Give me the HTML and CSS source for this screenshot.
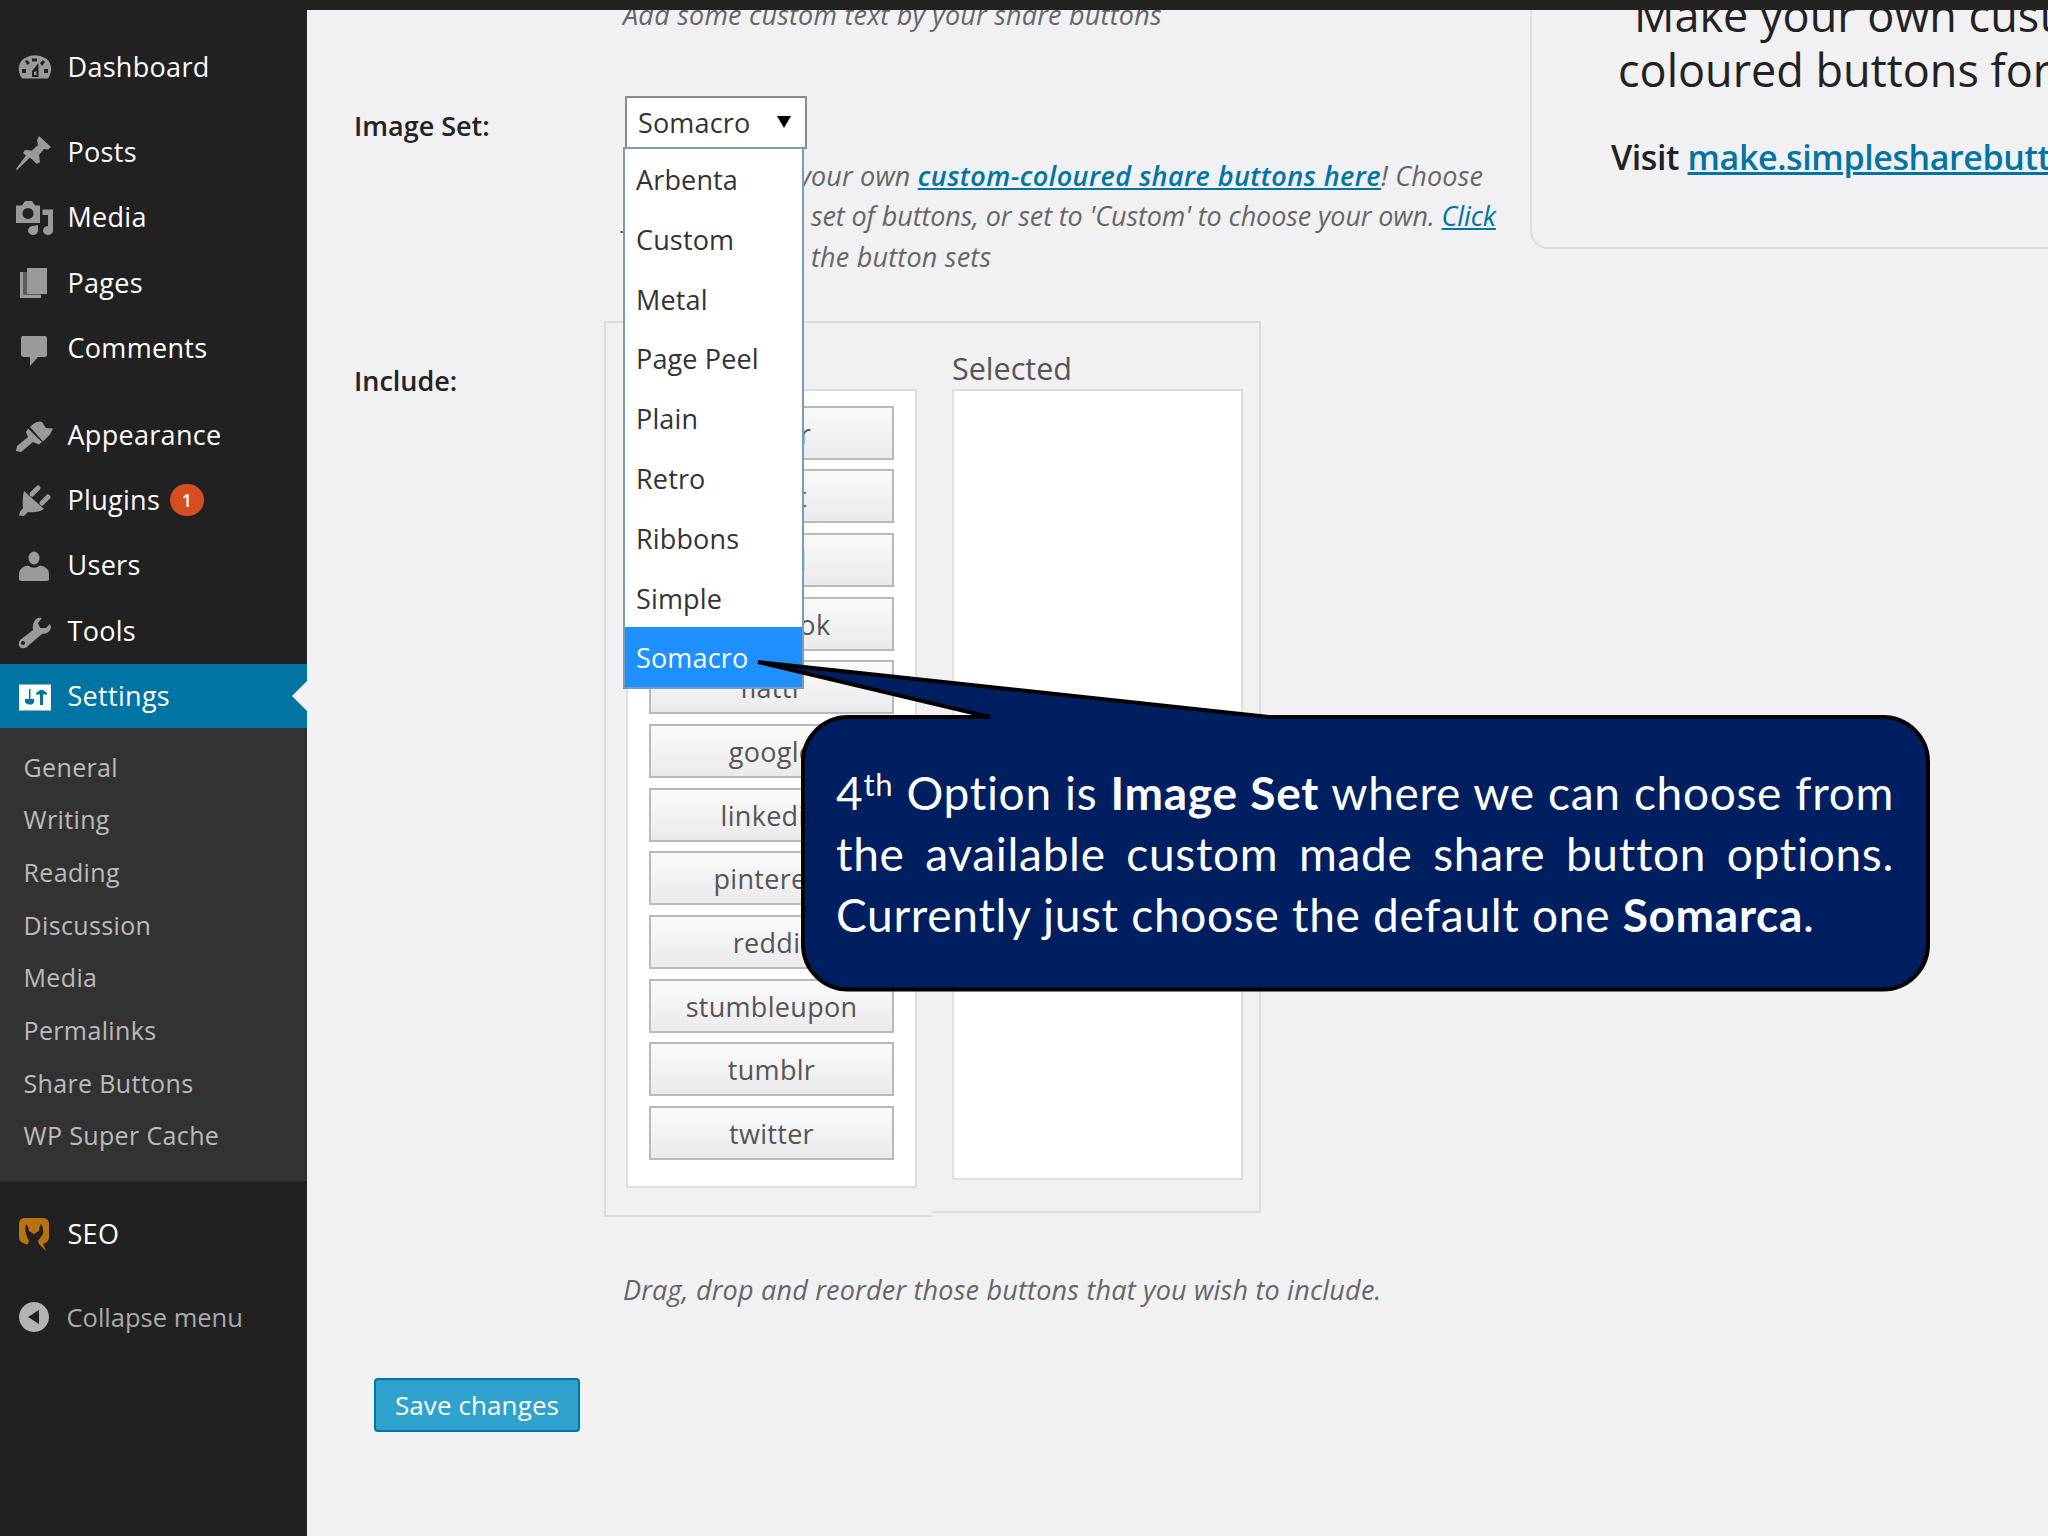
FILE: index.html
```html
<!DOCTYPE html>
<html lang="en">
  <head>
    <title>Share Buttons Settings</title>
    <meta charset="UTF-8" />
    <link rel="stylesheet" href="styles.css">
  </head>

  <body>
    <div class="topbar"></div>

    <div class="page">
      <nav class="sidebar">
        <ul class="menu">
          <li class="dashboard">
            <svg class="icon" viewBox="0 0 44 44"><path fill-rule="evenodd" d="M10 33.500C5 26 6 18 12 13.500Q23 7 34 13.500C40 18 41 26 36 33.500ZM20 13.500v3h5v-3ZM13 16l2 4 3-2-3-3ZM31 15l-3 3 2 3 3-4ZM10 24v4h4v-4ZM32 24v4h4v-4ZM26.500 18L20 26v6h6.500ZM24.500 26v4H22v-3Z"/></svg>
            <span>Dashboard</span>
          </li>
          <li class="posts">
            <svg class="icon" viewBox="0 0 44 44"><path d="M27 6L39 17l-3 2.500-4-.5-5 6 1 7-3 2-7-6.500L5 40l-1-1L14 25.500 11 23l2-3 7 .5 6-5.500-1-5Z"/></svg>
            <span>Posts</span>
          </li>
          <li class="media">
            <svg class="icon" viewBox="0 0 44 44"><path fill-rule="evenodd" d="M4 10.500h6L13 6h7l3 4.500h5V28H4ZM16 13a5.500 5.500 0 1 0 .01 0ZM30.500 14.500H41V36a5 4.500 0 1 1-5-5V20h-5.500ZM26 30v6a5 4.500 0 1 1-5-5Z"/></svg>
            <span>Media</span>
          </li>
          <li class="pages">
            <svg class="icon" viewBox="0 0 44 44"><path d="M15 7H35V33H15ZM8 11h3.500V34H29v3H8Z"/><path class="shade" d="M11.500 11H15V33H29V34H11.500Z"/></svg>
            <span>Pages</span>
          </li>
          <li class="comments">
            <svg class="icon" viewBox="0 0 44 44"><path d="M10 10H33q2 0 2 2V29q0 2-2 2H26L18 40V31H12q-3 0-3-3V12Z"/></svg>
            <span>Comments</span>
          </li>
          <li class="appearance">
            <svg class="icon" viewBox="0 0 44 44"><path d="M20 12q5-5 10-3l4 6 7 .500-3 6-7 7L18 14ZM16 15.500L30 29l-3 2.500-6-2.500L9 39l-5-1 1-5L16 24l-2-5Z"/></svg>
            <span>Appearance</span>
          </li>
          <li class="plugins">
            <svg class="icon" viewBox="0 0 44 44"><path d="M12 13L32 31q-6 4-16 3l-4 4-5-.500 1-4 3-3Q10 20 12 13Z"/><path class="prong" d="M20 16L26 10M30 25L36 19"/></svg>
            <span>Plugins</span>
            <span class="badge">1</span>
          </li>
          <li class="users">
            <svg class="icon" viewBox="0 0 44 44"><ellipse cx="22" cy="15" rx="5.500" ry="6.500"/><path d="M7 37V31q0-7 9-8.500Q22 27 28 22.500 37 24 37 31v6q-1 1-3 1H10q-2 0-3-1Z"/></svg>
            <span>Users</span>
          </li>
          <li class="tools">
            <svg class="icon" viewBox="0 0 44 44"><path fill-rule="evenodd" d="M30 9l-4 5 2 5 6 0 4-4 1 3q-1 7-9 7L17 36q-3 4-8 3-4-3-1-8L21 21q-1-7 3-11 3-2 6-1ZM11 32a2 2 0 1 0 .01 0Z"/></svg>
            <span>Tools</span>
          </li>
          <li class="settings current">
            <svg class="icon" viewBox="0 0 44 44"><path fill-rule="evenodd" d="M7 10.500H39v26H7ZM17 15v10h-4v3.500l3 2h4l2-2V25h-3.500V15ZM28 31V20.500h-4V19l4-3h3l4 3v1.500h-4V31Z"/></svg>
            <span>Settings</span>
          </li>
        </ul>
        <ul class="submenu">
          <li>General</li>
          <li>Writing</li>
          <li>Reading</li>
          <li>Discussion</li>
          <li>Media</li>
          <li>Permalinks</li>
          <li>Share Buttons</li>
          <li>WP Super Cache</li>
        </ul>
        <ul class="menu menu-bottom">
          <li class="seo">
            <svg class="icon" viewBox="0 0 44 44"><path d="M12 6H32q5 1 5 6V26q-1 5-6 6l3 7-9-9-5 1-3 2Q7 31 7 26V12q0-5 5-6Z"/><path class="cut" d="M14 12q3 3 3 7l5 3 5-3q0-4 2-7 3 5 2 10l-5 7 1 4H15q3-3 1-6-4-8-2-15Z"/></svg>
            <span>SEO</span>
          </li>
          <li class="collapse">
            <svg class="icon" viewBox="0 0 44 44"><path fill-rule="evenodd" d="M22 7a15 15 0 1 0 .01 0ZM27 15V29L16 22Z"/></svg>
            <span>Collapse menu</span>
          </li>
        </ul>
      </nav>

      <main class="content">
        <p class="hint hint-text">Add some custom text by your share buttons</p>

        <div class="row row-set">
          <div class="label">Image Set:</div>
          <div class="field">
            <div class="select">
              <span>Somacro</span>
              <svg class="arrow" viewBox="0 0 14 12"><path d="M0 0H14L7 12Z"/></svg>
              <ul class="options">
                <li>Arbenta</li>
                <li>Custom</li>
                <li>Metal</li>
                <li>Page Peel</li>
                <li>Plain</li>
                <li>Retro</li>
                <li>Ribbons</li>
                <li>Simple</li>
                <li class="active">Somacro</li>
              </ul>
            </div>
            <p class="hint hint-set">
              <span class="line l1"><span class="lead lead-right">Simply make y</span>our own <a class="strong">custom-coloured share buttons here</a>! Choose</span>
              <span class="line l2"><span class="lead">your favourite</span>set of buttons, or set to 'Custom' to choose your own. <a>Click</a></span>
              <span class="line l3"><span class="lead">here to preview</span>the button sets</span>
            </p>
          </div>
        </div>

        <div class="row row-include">
          <div class="label">Include:</div>
          <div class="sorter">
            <div class="column available">
              <h3>Available</h3>
              <ul class="list">
                <li>buffer</li>
                <li>diggit</li>
                <li>email</li>
                <li>facebook</li>
                <li>flattr</li>
                <li>google</li>
                <li>linkedin</li>
                <li>pinterest</li>
                <li>reddit</li>
                <li>stumbleupon</li>
                <li>tumblr</li>
                <li>twitter</li>
              </ul>
            </div>
            <div class="column selected">
              <h3>Selected</h3>
              <ul class="list"></ul>
            </div>
          </div>
        </div>

        <p class="hint hint-drag">Drag, drop and reorder those buttons that you wish to include.</p>

        <button class="save">Save changes</button>
      </main>

      <aside class="promo">
        <h2><span class="promo-first">Make your own custom-</span><span class="promo-second">coloured buttons for free</span></h2>
        <p>Visit <a>make.simplesharebuttons.com</a></p>
      </aside>
    </div>

    <div class="callout">
      <svg class="bubble" viewBox="0 0 1182 340"><path d="M8 5L519 60H1133A45 45 0 0 1 1178 105V287.500A45 45 0 0 1 1133 332.500H98A45 45 0 0 1 53 287.500V105A45 45 0 0 1 98 60H240Z"/></svg>
      <div class="callout-text">
        <div class="c1">4<sup>th</sup> Option is <b>Image Set</b> where we can choose from</div>
        <div class="c2">the available custom made share button options.</div>
        <div class="c3">Currently just choose the default one <b>Somarca</b>.</div>
      </div>
    </div>
  </body>
</html>
```

FILE: styles.css
```css
* {
  box-sizing: border-box;
}
body {
  margin: 0;
  width: 2048px;
  height: 1536px;
  overflow: hidden;
  position: relative;
  background: #f1f0f2;
  color: #222;
  font-family: "Open Sans", sans-serif;
  font-size: 27px;
}
ul, p, h2, h3 {
  margin: 0;
  padding: 0;
  list-style: none;
  font-weight: 400;
}
a {
  color: #0074a2;
  text-decoration: underline;
}

.topbar {
  height: 10px;
  background: #222221;
}
.page {
  display: flex;
  height: 1526px;
  overflow: hidden;
}

/* sidebar */
.sidebar {
  width: 307px;
  flex: none;
  background: #222122;
  padding-top: 24px;
}
.menu li {
  height: 65.4px;
  display: flex;
  align-items: center;
  padding-left: 11.500px;
  color: #fff;
  letter-spacing: 0.3px;
  white-space: nowrap;
}
.menu span {
  line-height: 36px;
}
.menu .posts {
  margin-top: 20px;
}
.menu .appearance {
  margin-top: 21px;
}
.menu .current {
  height: 64px;
  background: #0074a2;
  position: relative;
}
.current::after {
  content: "";
  position: absolute;
  right: 0;
  top: 17px;
  border: 15px solid transparent;
  border-left: 0;
  border-right-color: #f1f0f2;
}
.icon {
  width: 44px;
  height: 44px;
  margin-right: 12px;
  flex: none;
  fill: #9b999b;
}
.current .icon {
  fill: #fff;
}
.prong {
  stroke: #9b999b;
  stroke-width: 5;
  stroke-linecap: round;
}
.shade {
  fill: #5c5a5c;
}
.menu .badge {
  width: 34px;
  height: 32px;
  line-height: 32px;
  margin-left: 10px;
  border-radius: 16px;
  background: #d54e21;
  font-size: 18px;
  font-weight: 600;
  text-align: center;
}
.submenu {
  height: 453px;
  padding: 13px 0 0 23.500px;
  background: #333233;
  color: #bbb;
  font-size: 25px;
  letter-spacing: 0.36px;
}
.submenu li {
  height: 52.700px;
  line-height: 52.700px;
}
.menu-bottom {
  padding-top: 20.500px;
}
.seo .icon {
  fill: #b8730f;
}
.seo .cut {
  fill: #222122;
}
.menu .collapse {
  margin-top: 18px;
  color: #aaa;
  font-size: 25.500px;
  letter-spacing: 0;
}
.collapse .icon {
  fill: #b4b2b4;
  margin-right: 11px;
}

/* form */
.content {
  width: 1223px;
  flex: none;
  padding-left: 47px;
}
.hint {
  font-size: 27px;
  font-style: italic;
  letter-spacing: 0.2px;
  line-height: 40.500px;
  color: #666;
  white-space: nowrap;
}
.hint-text {
  margin: -15.500px 0 0 269px;
}
.row {
  display: flex;
}
.label {
  width: 271px;
  flex: none;
  font-weight: 600;
  line-height: 36px;
}
.row-set {
  margin-top: 61px;
}
.row-set .label {
  padding-top: 12px;
}
.select {
  width: 182px;
  height: 53px;
  position: relative;
  display: flex;
  align-items: center;
  justify-content: space-between;
  padding: 0 14px 1px 11px;
  border: 2px solid #8b898c;
  background: #fff;
  color: #333;
  letter-spacing: 0.15px;
}
.arrow {
  width: 14px;
  height: 12px;
}
.options {
  position: absolute;
  z-index: 1;
  left: -4px;
  top: 49px;
  width: 181px;
  border: 2px solid #7a9cb6;
  background: #fff;
}
.options li {
  height: 59.800px;
  line-height: 61px;
  padding-left: 11px;
}
.options .active {
  background: #1e90ff;
  color: #fff;
}
.hint-set {
  margin: 6.500px 0 0 -2px;
}
.line {
  display: block;
}
.lead {
  display: inline-block;
  width: 188px;
}
.lead-right {
  text-align: right;
}
.l1 {
  letter-spacing: 0.15px;
}
.l2 {
  letter-spacing: -0.12px;
}
.l3 .lead {
  letter-spacing: -0.2px;
}
.strong {
  font-weight: 600;
  letter-spacing: 0.45px;
}
.row-include {
  margin-top: 43.500px;
}
.row-include .label {
  width: 250px;
  padding-top: 42px;
}
.sorter {
  display: flex;
  align-items: flex-start;
}
.column {
  border: 2px solid #dddcdf;
  padding-top: 24px;
}
.column h3 {
  font-size: 30.500px;
  line-height: 42px;
  color: #555;
}
.available {
  width: 328px;
  height: 896px;
  border-right: 0;
  padding-left: 20px;
}
.selected {
  width: 329px;
  height: 892px;
  border-left: 0;
  padding-left: 20px;
}
.list {
  width: 291px;
  height: 799px;
  border: 2px solid #dfdee0;
  background: #fff;
}
.available .list {
  display: flex;
  flex-direction: column;
  gap: 9.700px;
  padding: 15px 0 0 21px;
}
.selected .list {
  height: 791px;
}
.list li {
  width: 245px;
  height: 54px;
  line-height: 52px;
  border: 2px solid #b9b8bb;
  background: linear-gradient(#fafafb, #ebeaec);
  color: #555;
  letter-spacing: 0.3px;
  text-align: center;
}
.hint-drag {
  margin: 53px 0 0 269px;
}
.save {
  display: block;
  width: 206px;
  height: 54px;
  margin: 67.500px 0 0 20px;
  padding: 0;
  border: 2px solid #0074a2;
  border-radius: 4px;
  background: #2ea2cc;
  color: #fff;
  font: 26px "Open Sans", sans-serif;
  letter-spacing: 0.1px;
}

/* right hand box */
.promo {
  width: 900px;
  height: 239px;
  flex: none;
  border: 2px solid #e0dfe2;
  border-top: 0;
  border-radius: 0 0 0 18px;
  white-space: nowrap;
}
.promo h2 {
  font-size: 45px;
  line-height: 55px;
  margin-top: -23px;
}
.promo h2 span {
  display: block;
}
.promo-first {
  padding-left: 102px;
}
.promo-second {
  padding-left: 86px;
}
.promo p {
  margin-top: 30px;
  padding-left: 79px;
  font-size: 34px;
  font-weight: 600;
  letter-spacing: -0.4px;
  line-height: 60px;
}

/* callout over the form */
.callout {
  position: absolute;
  z-index: 2;
  left: 750px;
  top: 657px;
  width: 1182px;
  height: 340px;
}
.bubble {
  position: absolute;
  left: 0;
  top: 0;
  width: 1182px;
  height: 340px;
  fill: #001f60;
  stroke: #000;
  stroke-width: 4;
}
.callout-text {
  position: relative;
  padding: 104.500px 38px 0 86px;
  color: #fff;
  font-family: Lato, sans-serif;
  font-size: 46px;
  letter-spacing: 0.7px;
  line-height: 61.400px;
  white-space: nowrap;
}
.callout sup {
  font-size: 31px;
  line-height: 0;
  vertical-align: 14px;
}
.c1,
.c2 {
  text-align-last: justify;
}
```
